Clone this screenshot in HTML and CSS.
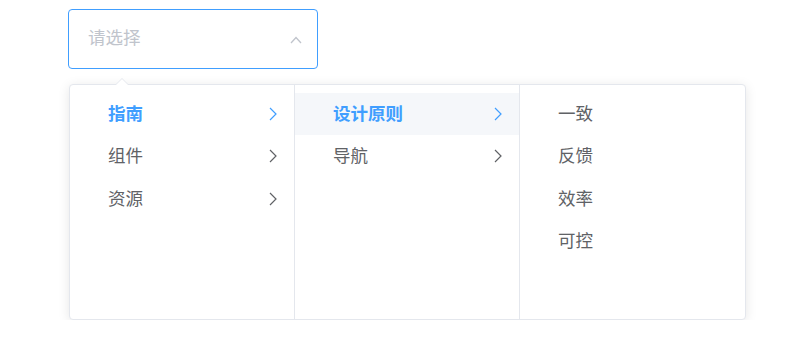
FILE: index.html
```html
<!DOCTYPE html>
<html lang="zh">
<head>
<meta charset="utf-8">
<link rel="stylesheet" href="styles.css">
</head>
<body>
<div class="wrap">
  <div class="input">
    <span class="placeholder">请选择</span>
    <svg class="up" width="12" height="8" viewBox="0 0 12 8"><path d="M1 7 L6 1.5 L11 7" fill="none" stroke="#c0c4cc" stroke-width="1.3"/></svg>
  </div>
  <div class="panel">
    <span class="arrow"></span>
    <ul class="menu">
      <li class="node active"><span>指南</span><svg class="chev" width="8" height="14" viewBox="0 0 8 14"><path d="M1 1 L7 7 L1 13" fill="none" stroke="currentColor" stroke-width="1.2"/></svg></li>
      <li class="node"><span>组件</span><svg class="chev" width="8" height="14" viewBox="0 0 8 14"><path d="M1 1 L7 7 L1 13" fill="none" stroke="currentColor" stroke-width="1.2"/></svg></li>
      <li class="node"><span>资源</span><svg class="chev" width="8" height="14" viewBox="0 0 8 14"><path d="M1 1 L7 7 L1 13" fill="none" stroke="currentColor" stroke-width="1.2"/></svg></li>
    </ul>
    <ul class="menu">
      <li class="node active hover"><span>设计原则</span><svg class="chev" width="8" height="14" viewBox="0 0 8 14"><path d="M1 1 L7 7 L1 13" fill="none" stroke="currentColor" stroke-width="1.2"/></svg></li>
      <li class="node"><span>导航</span><svg class="chev" width="8" height="14" viewBox="0 0 8 14"><path d="M1 1 L7 7 L1 13" fill="none" stroke="currentColor" stroke-width="1.2"/></svg></li>
    </ul>
    <ul class="menu">
      <li class="node"><span>一致</span></li>
      <li class="node"><span>反馈</span></li>
      <li class="node"><span>效率</span></li>
      <li class="node"><span>可控</span></li>
    </ul>
  </div>
</div>
</body>
</html>
```
FILE: styles.css
```css
html, body {
  margin: 0;
  background: #fff;
}
body {
  font-family: "Noto Sans CJK SC", "Noto Sans", sans-serif;
  font-size: 17.5px;
  color: #606266;
}
.wrap {
  padding: 9px 0 0 68px;
}
.input {
  box-sizing: border-box;
  width: 250px;
  height: 60px;
  border: 1px solid #409eff;
  border-radius: 4px;
  display: flex;
  align-items: center;
  justify-content: space-between;
  padding: 0 15px 0 19px;
}
.placeholder {
  color: #c0c4cc;
  margin-top: -5px;
}
.up {
  display: block;
  margin-top: 2px;
}
.panel {
  position: relative;
  box-sizing: border-box;
  margin-top: 15px;
  margin-left: 1px;
  width: 677px;
  height: 236px;
  border: 1px solid #e4e7ed;
  border-radius: 4px;
  background: #fff;
  box-shadow: 0 2px 12px rgba(0, 0, 0, 0.1);
  display: flex;
}
.arrow {
  position: absolute;
  top: -7px;
  left: 45px;
  width: 0;
  height: 0;
  border-left: 7px solid transparent;
  border-right: 7px solid transparent;
  border-bottom: 7px solid #e4e7ed;
}
.arrow::after {
  content: "";
  position: absolute;
  left: -6px;
  top: 1px;
  border-left: 6px solid transparent;
  border-right: 6px solid transparent;
  border-bottom: 6px solid #fff;
}
.menu {
  list-style: none;
  margin: 0;
  padding: 7.5px 0 0;
  width: 225px;
  box-sizing: border-box;
  border-right: 1px solid #e4e7ed;
}
.menu:last-child {
  border-right: none;
}
.node {
  height: 42.5px;
  display: flex;
  align-items: center;
  justify-content: space-between;
  padding: 0 17px 0 38px;
  color: #606266;
}
.node span {
  margin-top: -3px;
}
.node.active {
  color: #409eff;
  font-weight: bold;
}
.node.hover {
  background: #f5f7fa;
}
.chev {
  display: block;
}
```
